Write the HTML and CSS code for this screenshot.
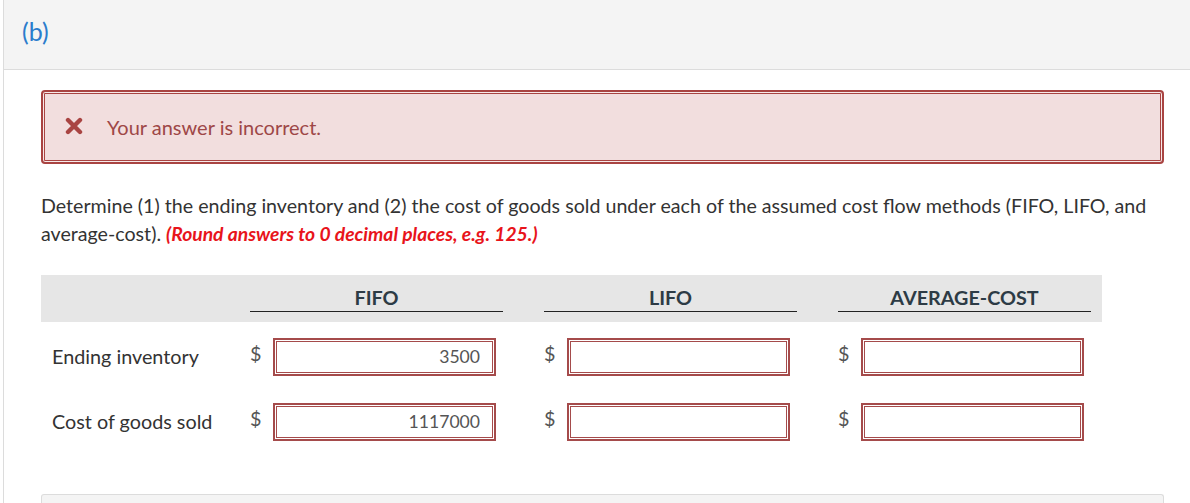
FILE: index.html
```html
<!DOCTYPE html>
<html>
<head>
<meta charset="utf-8">
<link rel="stylesheet" href="styles.css">
</head>
<body>
<div class="main">
  <div class="part-head">(b)</div>
  <div class="content">
    <div class="alert">
      <svg class="x-icon" width="18" height="18" viewBox="0 0 18 18"><path d="M3 3 L15 15 M15 3 L3 15" stroke="#a94442" stroke-width="4.4" stroke-linecap="round"/></svg>
      <span>Your answer is incorrect.</span>
    </div>
    <p class="question">Determine (1) the ending inventory and (2) the cost of goods sold under each of the assumed cost flow methods (FIFO, LIFO, and average-cost). <em class="hint">(Round answers to 0 decimal places, e.g. 125.)</em></p>
    <div class="grid">
      <div class="hcell"></div>
      <div class="hcell"><span class="hlabel">FIFO</span></div>
      <div class="hcell"><span class="hlabel">LIFO</span></div>
      <div class="hcell"><span class="hlabel">AVERAGE-COST</span></div>

      <div class="label">Ending inventory</div>
      <div class="cell"><span class="dollar">$</span><div class="input">3500</div></div>
      <div class="cell"><span class="dollar">$</span><div class="input"></div></div>
      <div class="cell"><span class="dollar">$</span><div class="input"></div></div>

      <div class="label">Cost of goods sold</div>
      <div class="cell"><span class="dollar">$</span><div class="input">1117000</div></div>
      <div class="cell"><span class="dollar">$</span><div class="input"></div></div>
      <div class="cell"><span class="dollar">$</span><div class="input"></div></div>
    </div>
    <div class="next-box"></div>
  </div>
</div>
</body>
</html>
```
FILE: styles.css
```css
html, body {
  margin: 0;
  padding: 0;
  background: #fff;
  font-family: Lato, "Open Sans", sans-serif;
  color: #333;
}
.main {
  margin-left: 3px;
  border-left: 1px solid #dcdcdc;
  min-height: 503px;
}
.part-head {
  height: 69px;
  background: #f4f4f4;
  border-bottom: 1px solid #dcdcdc;
  padding-left: 18px;
  font-size: 25px;
  color: #2b7ccc;
  line-height: 62px;
}
.content {
  padding: 20px 26px 0 37px;
}
.alert {
  height: 74px;
  box-sizing: border-box;
  background: #f2dede;
  border: 2px solid #a94442;
  border-radius: 4px;
  box-shadow: inset 0 0 0 1px #f7e9e9, inset 0 0 0 2px #a94442;
  display: flex;
  align-items: center;
  padding-left: 22px;
  color: #9e4747;
  font-size: 20px;
}
.x-icon {
  margin-right: 24px;
  margin-top: -2px;
}
.question {
  margin: 28px 0 0 0;
  font-size: 19.65px;
  line-height: 28px;
  color: #333;
  padding-right: 4px;
}
.hint {
  color: #e8141b;
  font-weight: 700;
  font-style: italic;
  font-size: 19.3px;
  line-height: 28px;
}
.grid {
  margin-top: 27px;
  width: 1061px;
  display: grid;
  grid-template-columns: 168px 253px 253px 253px;
  column-gap: 41px;
  grid-template-rows: 47px 65px 65px;
}
.hcell {
  background: #e6e6e6;
  margin-right: -41px;
  padding-right: 41px;
}
.hcell:nth-child(4) {
  margin-right: -11px;
  padding-right: 11px;
}
.hcell .hlabel {
  display: block;
  margin-top: 12px;
  padding-bottom: 3px;
  border-bottom: 1px solid #222;
  text-align: center;
  font-weight: 700;
  font-size: 19.8px;
  line-height: 21px;
  color: #2d3b45;
}
.label {
  padding-left: 11px;
  padding-top: 22px;
  font-size: 19.8px;
  color: #333;
  white-space: nowrap;
}
.cell {
  display: flex;
  align-items: flex-start;
  padding-top: 16px;
}
.dollar {
  width: 23px;
  font-size: 19.8px;
  color: #555;
  line-height: 20px;
  margin-top: 5px;
}
.input {
  width: 223px;
  height: 38px;
  box-sizing: border-box;
  border: 2px solid #a54b4b;
  box-shadow: inset 0 0 0 1px #fff, inset 0 0 0 2px #a54b4b;
  text-align: right;
  padding-right: 14px;
  font-size: 17.6px;
  line-height: 34px;
  color: #555;
}
.next-box {
  margin-top: 42px;
  height: 20px;
  background: #f4f4f4;
  border: 1px solid #dcdcdc;
  border-bottom: none;
  border-radius: 3px 3px 0 0;
}
```
